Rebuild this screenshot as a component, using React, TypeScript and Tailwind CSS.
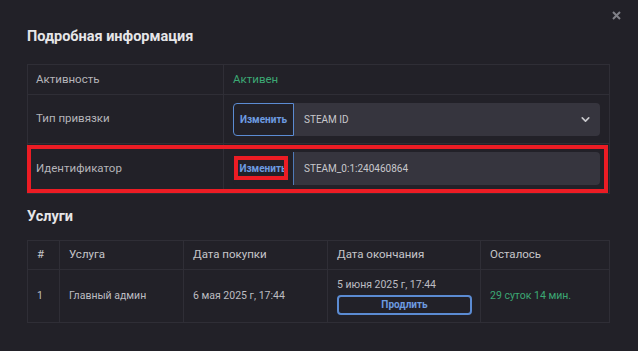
import { ChevronDown } from "lucide-react";

const services = [
  { n: 1, name: "Главный админ", bought: "6 мая 2025 г, 17:44", ends: "5 июня 2025 г, 17:44", left: "29 суток 14 мин." },
];

function ChangeButton({ outlined }: { outlined: boolean }) {
  return (
    <button
      className={
        "h-full w-[61px] shrink-0 rounded-l-[4px] bg-[#222128] text-[10px] font-bold text-[#6d9be0] " +
        (outlined ? "border border-[#5b8bd2]" : "border-r border-[#4f7ab8]")
      }
    >
      Изменить
    </button>
  );
}

export default function App() {
  return (
    <div className="relative h-[351px] w-[638px] overflow-hidden bg-[#222128] px-[27px] pt-[28px] font-['Roboto',sans-serif]">
      <button className="absolute right-[17px] top-[11px] text-[#808088]">
        <svg width="9" height="9" viewBox="0 0 9 9" fill="none" stroke="currentColor" strokeWidth="2">
          <path d="M1 1l7 7M8 1L1 8" />
        </svg>
      </button>

      <h2 className="text-[14.5px] font-bold leading-[18px] text-[#e6e6e8]">Подробная информация</h2>

      {/* details */}
      <div className="mt-[18px] w-[583px] border border-[#2f2e36] text-[11.5px]">
        <div className="flex h-[30px] border-b border-[#2f2e36]">
          <div className="flex w-[196px] items-center border-r border-[#2f2e36] pl-[8px] text-[#b4b4b9]">Активность</div>
          <div className="flex flex-1 items-center pl-[9px] text-[#3ca874]">Активен</div>
        </div>
        <div className="flex h-[49px] border-b border-[#2f2e36]">
          <div className="flex w-[196px] items-center border-r border-[#2f2e36] pl-[8px] text-[#b4b4b9]">Тип привязки</div>
          <div className="flex flex-1 items-center pl-[9px] pr-[9px]">
            <div className="flex h-[33px] w-full">
              <ChangeButton outlined />
              <div className="flex flex-1 items-center justify-between rounded-r-[4px] bg-[#36353e] pl-[10px] pr-[8px] text-[10px] text-[#c8c8cc]">
                <span>STEAM ID</span>
                <ChevronDown className="h-[13px] w-[13px] text-[#c8c8cc]" strokeWidth={3} />
              </div>
            </div>
          </div>
        </div>
        <div className="flex h-[49px]">
          <div className="flex w-[196px] items-center border-r border-[#2f2e36] pl-[8px] text-[#b4b4b9]">Идентификатор</div>
          <div className="flex flex-1 items-center pl-[9px] pr-[9px]">
            <div className="flex h-[33px] w-full">
              <ChangeButton outlined={false} />
              <div className="flex flex-1 items-center rounded-r-[4px] bg-[#36353e] pl-[10px] text-[10px] text-[#c8c8cc]">
                STEAM_0:1:240460864
              </div>
            </div>
          </div>
        </div>
      </div>

      <h2 className="mt-[14px] text-[14.5px] font-bold leading-[18px] text-[#e6e6e8]">Услуги</h2>

      {/* services */}
      <div className="mt-[14px] w-[583px] border border-[#2f2e36] text-[11.5px]">
        <div className="flex h-[29px] border-b border-[#2f2e36] text-[#c6c6ca]">
          <div className="flex w-[32px] items-center border-r border-[#2f2e36] pl-[9px]">#</div>
          <div className="flex w-[124px] items-center border-r border-[#2f2e36] pl-[9px]">Услуга</div>
          <div className="flex w-[144px] items-center border-r border-[#2f2e36] pl-[9px]">Дата покупки</div>
          <div className="flex w-[153px] items-center border-r border-[#2f2e36] pl-[9px]">Дата окончания</div>
          <div className="flex flex-1 items-center pl-[9px]">Осталось</div>
        </div>
        {services.map((s) => (
          <div key={s.n} className="flex h-[52px] text-[10.5px] text-[#bdbdc2]">
            <div className="flex w-[32px] items-center border-r border-[#2f2e36] pl-[9px]">{s.n}</div>
            <div className="flex w-[124px] items-center border-r border-[#2f2e36] pl-[9px]">{s.name}</div>
            <div className="flex w-[144px] items-center border-r border-[#2f2e36] pl-[9px]">{s.bought}</div>
            <div className="flex w-[153px] flex-col justify-center border-r border-[#2f2e36] pl-[9px] pr-[8px]">
              <span className="leading-[14px]">{s.ends}</span>
              <button className="mt-[3px] h-[20px] w-[135px] rounded-[4px] border-2 border-[#5b8bd2] text-[10px] font-bold text-[#6d9be0]">
                Продлить
              </button>
            </div>
            <div className="flex flex-1 items-center pl-[9px] text-[#3ca874]">{s.left}</div>
          </div>
        ))}
      </div>

      {/* annotation boxes */}
      <div className="pointer-events-none absolute left-[27px] top-[145px] h-[48px] w-[581px] border-[4px] border-[#ec1c24]" />
      <div className="pointer-events-none absolute left-[234px] top-[156px] h-[24px] w-[54px] border-[4px] border-[#ec1c24]" />
    </div>
  );
}
